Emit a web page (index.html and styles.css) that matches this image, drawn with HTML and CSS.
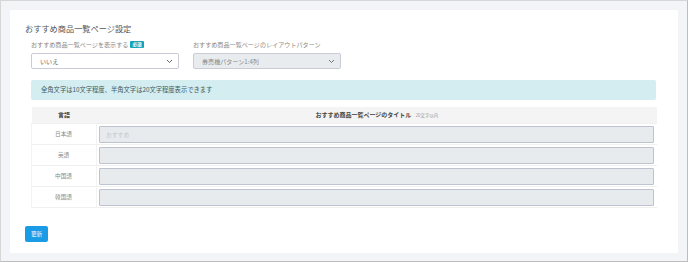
FILE: index.html
```html
<!DOCTYPE html>
<html lang="ja">
<head>
    <meta charset="UTF-8">
    <title>おすすめ商品一覧ページ設定</title>
    <link rel="stylesheet" href="styles.css">
</head>
<body>
    <div class="card">
        <h2 class="card-title">おすすめ商品一覧ページ設定</h2>

        <div class="form-body">
            <div class="form-row">
                <div class="form-group">
                    <label>おすすめ商品一覧ページを表示する<span class="badge">必須</span></label>
                    <div class="select">
                        <span>いいえ</span>
                        <svg width="7" height="5" viewBox="0 0 7 5"><path d="M1 1l2.5 2.5L6 1" fill="none" stroke="#666" stroke-width="1"/></svg>
                    </div>
                </div>
                <div class="form-group">
                    <label>おすすめ商品一覧ページのレイアウトパターン</label>
                    <div class="select disabled">
                        <span>券売機パターン1:4列</span>
                        <svg width="7" height="5" viewBox="0 0 7 5"><path d="M1 1l2.5 2.5L6 1" fill="none" stroke="#777" stroke-width="1"/></svg>
                    </div>
                </div>
            </div>

            <div class="alert">全角文字は10文字程度、半角文字は20文字程度表示できます</div>

            <table class="lang-table">
                <thead>
                    <tr>
                        <th class="col-lang">言語</th>
                        <th>おすすめ商品一覧ページのタイトル <small>20文字以内</small></th>
                    </tr>
                </thead>
                <tbody>
                    <tr>
                        <td class="col-lang">日本語</td>
                        <td><div class="input placeholder">おすすめ</div></td>
                    </tr>
                    <tr>
                        <td class="col-lang">英語</td>
                        <td><div class="input"></div></td>
                    </tr>
                    <tr>
                        <td class="col-lang">中国語</td>
                        <td><div class="input"></div></td>
                    </tr>
                    <tr>
                        <td class="col-lang">韓国語</td>
                        <td><div class="input"></div></td>
                    </tr>
                </tbody>
            </table>
        </div>

        <button class="btn-update">更新</button>
    </div>
</body>
</html>
```

FILE: styles.css
```css
* {
    margin: 0;
    padding: 0;
    box-sizing: border-box;
}

html, body {
    height: 100%;
}

body {
    font-family: "Noto Sans CJK JP", "Noto Sans", sans-serif;
    background: #f3f4f8;
    border: 1px solid #d6d6d6;
    border-right-color: #bdbdbd;
    border-bottom-color: #bdbdbd;
    padding: 9px 9px 8px 9px;
    color: #555;
}

/* ---------------------------------カード---------------------------------- */

.card {
    background: #fff;
    height: 100%;
    padding: 12px 15px 11px 15px;
}

.card-title {
    font-size: 8.2px;
    font-weight: normal;
    color: #555;
    line-height: 13px;
    height: 13px;
}

.form-body {
    padding: 0 6px;
}

.form-row {
    display: flex;
    gap: 14px;
    margin-top: 5px;
}

.form-group {
    width: 148px;
}

.form-group label {
    display: flex;
    align-items: center;
    font-size: 6.1px;
    color: #888;
    height: 9px;
    line-height: 9px;
    margin-bottom: 4px;
}

.badge {
    background: #17a2b8;
    color: #fff;
    font-size: 4.6px;
    font-weight: bold;
    line-height: 7px;
    padding: 0 2px;
    border-radius: 1px;
    margin-left: 2px;
}

.select {
    height: 16px;
    border: 1px solid #c9ccd6;
    border-radius: 2px;
    display: flex;
    align-items: center;
    justify-content: space-between;
    padding: 0 5px 0 8px;
    font-size: 6.1px;
    color: #666;
    background: #fff;
}

.select.disabled {
    background: #e9ecef;
    color: #888;
}

/* ---------------------------------注意書き---------------------------------- */

.alert {
    margin-top: 11px;
    height: 20px;
    line-height: 20px;
    background: #d3edf1;
    color: #3d5c63;
    font-size: 6.3px;
    padding-left: 10px;
    border-radius: 2px;
    margin-right: 1px;
}

/* ---------------------------------言語テーブル---------------------------------- */

.lang-table {
    margin-top: 7px;
    width: 100%;
    border-collapse: collapse;
}

.lang-table th {
    background: #f4f4f4;
    height: 16px;
    font-size: 6px;
    font-weight: bold;
    color: #444;
    text-align: center;
}

.lang-table th small {
    font-size: 4.4px;
    font-weight: normal;
    color: #999;
    margin-left: 3px;
}

.lang-table td {
    border-top: 1px solid #f0f0f0;
    border-bottom: 1px solid #f0f0f0;
    padding: 2px 3px 1px 2px;
    height: 21px;
}

.lang-table .col-lang {
    width: 65px;
    text-align: center;
    font-size: 5.6px;
    color: #888;
    border-left: 1px solid #f3f3f3;
    border-right: 1px solid #f3f3f3;
}

.lang-table th.col-lang {
    color: #444;
    font-size: 6px;
    border: none;
}

.input {
    height: 17px;
    background: #e8ebee;
    border: 1px solid #bfc2cf;
    border-radius: 1px;
    font-size: 5.8px;
    line-height: 15px;
    padding-left: 6px;
}

.input.placeholder {
    color: #c4c7cc;
}

/* ---------------------------------ボタン---------------------------------- */

.btn-update {
    margin-top: 18px;
    width: 23px;
    height: 16px;
    background: #1a9be6;
    color: #fff;
    border: none;
    border-radius: 2px;
    font-family: inherit;
    font-size: 5.6px;
}
```
